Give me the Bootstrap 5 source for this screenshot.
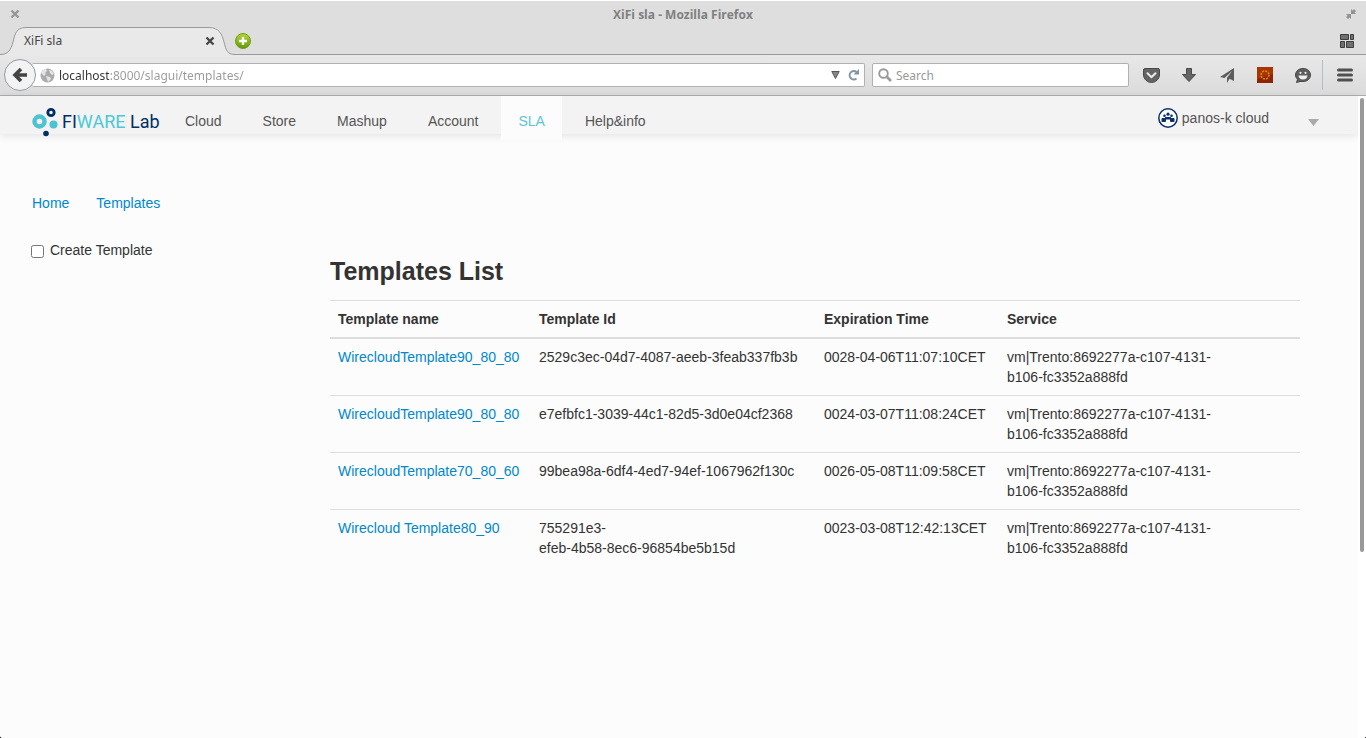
<!DOCTYPE html>
<html lang="en">
<head>
<meta charset="utf-8">
<meta name="viewport" content="width=device-width, initial-scale=1">
<title>XiFi sla</title>
<link href="https://cdn.jsdelivr.net/npm/bootstrap@5.3.0/dist/css/bootstrap.min.css" rel="stylesheet">
<style>
html{background:#000}
body{font:14px/20px "Liberation Sans",Arial,sans-serif;color:#333;background:transparent}
svg{display:block;flex:none}
button{border:0;background:none;padding:0}
.window{height:100vh;min-height:480px;overflow:hidden;background:#fcfcfc;border-radius:0 0 3px 3px}
.chrome{font:12px/16px "Noto Sans","Open Sans",sans-serif;background:#dedede;border-top:1px solid #fff}
.titlebar{height:26px;padding:0 10px;color:#808080;font-family:"Open Sans",sans-serif}
.titlebar strong{padding-top:2px}
.tabs{height:28px;border-bottom:1px solid #999}
.tab-shape{width:235px;height:28px;margin-bottom:-1px}
.tab-shape>svg{position:absolute;left:0;top:0}
.tab-label{position:relative;padding:0 20px 0 24px;height:28px;color:#444}
.tools{height:41px;background:linear-gradient(#e8e8e8,#dbdbdb);border-bottom:1px solid #adadad;padding-left:4px}
.field{height:24px;background:#fff;border:1px solid #b0b0b0;border-radius:2px}
.field input{border:0;outline:0;padding:2px 0 0;background:transparent;min-width:0}
.field input::placeholder{color:#999;opacity:1}
.field .url-input{background:linear-gradient(90deg,#333 50px,#999 50px);-webkit-background-clip:text;background-clip:text;color:transparent}
.url-field{margin-left:-4px;padding:0 5px 0 8px;border-left:0}
.search-field{width:257px;padding:0 6px 0 5px;margin-left:7px}
.back-btn{position:relative;z-index:1}
.tool-icons{padding-left:3px}
.tool-icons button{width:38px;display:flex;justify-content:center}
.tool-icons .menu-btn{width:43px}
.menu-sep{width:1px;height:30px;background:#b4bcc4}
.page-area{background:#fcfcfc}
.scroll-track{width:8px;background:#fff;padding:2px 2px 0}
.scroll-thumb{width:4px;height:71%;background:#999;border-radius:2px}
.topnav{height:38px;background:#f3f3f3;box-shadow:0 2px 8px rgba(0,0,0,.1);padding:0 39px 0 32px;color:#555}
.brand{color:#002e67;width:135px;text-decoration:none;font:18px/20px Roboto,sans-serif;padding-top:7px}
.brand .ware{color:#4cc8d8}
.brand .brand-word{padding-top:9px}
.menu-links{gap:5px}
.menu-links a{color:#555;text-decoration:none;padding:15px 18px 3px;height:38px}
.menu-links a.current{color:#5fc3d6;background:#fcfcfc;height:44px;padding:15px 17px 9px}
.user-btn{color:#555;gap:4px;padding-top:12px}
.crumbs{padding:59px 32px 0;gap:27px}
a{color:#08c;text-decoration:none}
.side{width:299px;padding:27px 0 0 31px}
.side input{width:13px;height:13px;margin:5px 0 0}
.side label{gap:6px}
.listing{padding:43px 58px 0 31px}
h1{font-size:25px;line-height:30px;font-weight:700;margin:0 0 14px}
.tpl-table{--bs-table-bg:transparent;--bs-table-color:#333;color:#333;table-layout:fixed;border-top:1px solid #ddd;margin:0;min-width:930px}
.tpl-table>:not(caption)>*>*{padding:8px;border-bottom:1px solid #ddd}
.tpl-table>thead>tr>th{border-bottom:2px solid #ddd}
.tpl-table>tbody>tr:last-child>td{border-bottom:0}
.c-name{width:201px}.c-id{width:285px}.c-exp{width:183px}.c-end{width:67px}
</style>
</head>
<body>
<div class="window d-flex flex-column">
<header class="chrome flex-shrink-0">
  <div class="titlebar d-flex align-items-center justify-content-between">
    <button aria-label="Close window"><svg width="10" height="10" viewBox="0 0 10 10"><path d="M1.5 1.5l7 7m0-7l-7 7" stroke="#969696" stroke-width="2.4"/></svg></button>
    <strong>XiFi sla - Mozilla Firefox</strong>
    <button aria-label="Restore window"><svg width="10" height="10" viewBox="0 0 10 10" fill="#929292"><path d="M5 0v5h5L8.600 3.600 10 2 8.200.2 6.500 1.500zM0 5h5v5L3.600 8.600 2 10 .2 8.200 1.500 6.500z"/></svg></button>
  </div>
  <div class="tabs d-flex">
    <div class="tab-shape position-relative">
      <svg width="235" height="28"><path d="M0 27.500C8 27.500 11 23 13 15S16-.5 26-.5H209C219-.5 222 6 224 14S227 27.500 235 27.500V28H0z" fill="#e9e9e9"/><path d="M0 27.500C8 27.500 11 23 13 15S16 .5 26 .5H209C219 .5 222 7 224 15S227 27.500 235 27.500" fill="none" stroke="#999"/></svg>
      <div class="tab-label d-flex align-items-center justify-content-between"><span>XiFi sla</span><button aria-label="Close tab"><svg width="10" height="10" viewBox="0 0 10 10"><path d="M1.500 1.500l7 7m0-7l-7 7" stroke="#444" stroke-width="2.300"/></svg></button></div>
    </div>
    <button class="d-flex align-items-center" aria-label="New tab"><svg width="16" height="16" viewBox="0 0 16 16"><defs><linearGradient id="gr" x2="0" y2="1"><stop stop-color="#b5d83a"/><stop offset="1" stop-color="#5e9a05"/></linearGradient></defs><circle cx="8" cy="8" r="7.500" fill="url(#gr)" stroke="#729b16"/><path d="M8 4v8M4 8h8" stroke="#fff" stroke-width="2.400"/></svg></button>
    <button class="ms-auto me-2 pe-1 d-flex align-items-center" aria-label="Tab groups"><svg width="14" height="14" viewBox="0 0 14 14" fill="#707070" stroke="#3d3d3d"><path d="M.5.500h8v5h-8zM10.500.500h3v5h-3zM.5 7.500h4v6h-4zM6.500 7.500h7v6h-7z"/></svg></button>
  </div>
  <div class="tools d-flex align-items-center">
    <button class="back-btn" aria-label="Back"><svg width="32" height="32" viewBox="0 0 32 32"><circle cx="16" cy="16" r="15.500" fill="#f3f3f3" stroke="#9299a1"/><path d="M23 16H12M17 10l-6 6 6 6" fill="none" stroke="#444" stroke-width="3.600"/></svg></button>
    <div class="field url-field d-flex align-items-center flex-grow-1">
      <svg width="15" height="15" viewBox="0 0 15 15"><circle cx="7.500" cy="7.500" r="7" fill="#ababab"/><path d="M1 5c2-4 4-4 5-4l1 2-2 2 1 1-2 2-1-1zM9 2c3 0 4 2 5 4l-2 1-2-2zM6 8l4 1 1 2-3 3-1-3z" fill="#e4e4e4"/></svg>
      <input class="url-input flex-grow-1 ms-1" aria-label="Address" value="localhost:8000/slagui/templates/">
      <button aria-label="Show history"><svg width="9" height="8" viewBox="0 0 9 8"><path d="M.8.500h7.400L4.500 7.500z" fill="#888" stroke="#555"/></svg></button>
      <button class="ms-1 ps-1" aria-label="Reload"><svg width="11" height="12" viewBox="0 0 11 12"><path d="M8.500 9.500A4.200 4.200 0 1 1 8.500 3" fill="none" stroke="#8494a6" stroke-width="2"/><path d="M11 0v5.500H5.500z" fill="#8494a6"/></svg></button>
    </div>
    <div class="field search-field d-flex align-items-center">
      <svg width="14" height="14" viewBox="0 0 14 14" fill="none" stroke="#999"><circle cx="5.500" cy="5.500" r="4.300" stroke-width="1.900"/><path d="M9 9l4 4" stroke-width="2.600"/></svg>
      <input class="flex-grow-1 ms-1" aria-label="Search" placeholder="Search">
    </div>
    <div class="tool-icons d-flex align-items-center">
      <button aria-label="Pocket"><svg width="17" height="15" viewBox="0 0 17 15"><path d="M.5 2Q.5.500 2 .5h13q1.500 0 1.500 1.500v5q0 3-2.500 5.300-2.300 2.200-5.500 2.200T3 12.300Q.5 10 .5 7z" fill="#646464" stroke="#4a4a4a"/><path d="M4.500 5.300l4 3.800 4-3.800" fill="none" stroke="#eee" stroke-width="2" stroke-linecap="round"/></svg></button>
      <button aria-label="Downloads"><svg width="14" height="14" viewBox="0 0 14 14"><path d="M4.500.5h5v6h4L7 13.500.5 6.500h4z" fill="#656565" stroke="#4a4a4a"/></svg></button>
      <button aria-label="Share"><svg width="14" height="15" viewBox="0 0 14 15"><path d="M14 0v13l-4.500-2.200L7 15V9.800L12 3 4.500 10 0 9z" fill="#5c5c5c"/></svg></button>
      <button aria-label="Sun add-on"><svg width="16" height="16" viewBox="0 0 16 16"><path fill="#8e2400" d="M0 0h16v16H0z"/><path fill="#a93600" d="M0 0h16v7L0 12z"/><circle cx="8" cy="8" r="4" fill="none" stroke="#d98b18" stroke-width="1.500" stroke-dasharray="2 1.100"/></svg></button>
      <button aria-label="Chat"><svg width="16" height="15" viewBox="0 0 16 15"><path d="M8 .5c4.300 0 7.500 2.700 7.500 6.500S12.300 13.500 8 13.500H5L1.500 14.500l1-3.200C1.200 10.200.5 8.700.5 7 .5 3.200 3.700.5 8 .5z" fill="#5d5d5d" stroke="#484848"/><g fill="#eee"><circle cx="5.500" cy="4.800" r="1.100"/><circle cx="10.500" cy="4.800" r="1.100"/><path d="M3.500 7.500h9Q12 11.500 8 11.500T3.500 7.500z"/></g></svg></button>
      <span class="menu-sep"></span>
      <button class="menu-btn" aria-label="Menu"><svg width="16" height="14" viewBox="0 0 16 14"><path d="M1.500 2h13M1.500 7h13M1.500 12h13" stroke="#505050" stroke-width="3" stroke-linecap="round"/></svg></button>
    </div>
  </div>
</header>
<div class="page-area d-flex flex-grow-1">
  <div class="flex-grow-1">
    <nav class="topnav d-flex align-items-start">
      <a class="brand d-flex" href="#"><svg width="30" height="34" viewBox="0 0 30 34"><g fill="none"><circle cx="7.500" cy="18.500" r="5" stroke="#4cc3d3" stroke-width="4.400"/><circle cx="19" cy="9.500" r="3.200" stroke="#002e67" stroke-width="2.800"/></g><circle cx="21.500" cy="21.500" r="4" fill="#4cc3d3"/><circle cx="14" cy="30.500" r="2.800" fill="#002e67"/></svg><span class="brand-word text-nowrap">FI<span class="ware">WARE</span> Lab</span></a>
      <div class="menu-links d-flex align-items-start">
        <a href="#">Cloud</a><a href="#">Store</a><a href="#">Mashup</a><a href="#">Account</a><a class="current" href="#" aria-current="page">SLA</a><a href="#">Help&amp;info</a>
      </div>
      <button class="user-btn d-flex align-items-center ms-auto">
        <svg width="20" height="20" viewBox="0 0 20 20"><circle cx="10" cy="10" r="9.200" fill="#fff" stroke="#0a2f6b" stroke-width="1.500"/><g fill="#0a2f6b"><circle cx="10" cy="6.200" r="1.600"/><circle cx="6.500" cy="7.800" r="1.300"/><circle cx="13.500" cy="7.800" r="1.300"/><rect x="3.500" y="10" width="4.500" height="4" rx="1"/><rect x="12" y="10" width="4.500" height="4" rx="1"/><path d="M7 9h6l-.5 2.500h-5z"/></g></svg>
        <span>panos-k cloud</span>
        <svg class="ms-4 mt-2" width="22" height="7" viewBox="0 0 22 7"><path d="M11 0h11l-5.500 7z" fill="#aaa"/></svg>
      </button>
    </nav>
    <div class="crumbs d-flex"><a href="#">Home</a><a href="#">Templates</a></div>
    <main class="d-flex">
      <aside class="side flex-shrink-0"><label class="d-flex align-items-start"><input type="checkbox"><span>Create Template</span></label></aside>
      <section class="listing flex-grow-1">
        <h1>Templates List</h1>
        <table class="table tpl-table">
          <colgroup><col class="c-name"><col class="c-id"><col class="c-exp"><col><col class="c-end"></colgroup>
          <thead><tr><th>Template name</th><th>Template Id</th><th>Expiration Time</th><th>Service</th><th></th></tr></thead>
          <tbody>
            <tr><td><a href="#">WirecloudTemplate90_80_80</a></td><td>2529c3ec-04d7-4087-aeeb-3feab337fb3b</td><td>0028-04-06T11:07:10CET</td><td>vm|Trento:8692277a-c107-4131-<br>b106-fc3352a888fd</td><td></td></tr>
            <tr><td><a href="#">WirecloudTemplate90_80_80</a></td><td>e7efbfc1-3039-44c1-82d5-3d0e04cf2368</td><td>0024-03-07T11:08:24CET</td><td>vm|Trento:8692277a-c107-4131-<br>b106-fc3352a888fd</td><td></td></tr>
            <tr><td><a href="#">WirecloudTemplate70_80_60</a></td><td>99bea98a-6df4-4ed7-94ef-1067962f130c</td><td>0026-05-08T11:09:58CET</td><td>vm|Trento:8692277a-c107-4131-<br>b106-fc3352a888fd</td><td></td></tr>
            <tr><td><a href="#">Wirecloud Template80_90</a></td><td>755291e3-<br>efeb-4b58-8ec6-96854be5b15d</td><td>0023-03-08T12:42:13CET</td><td>vm|Trento:8692277a-c107-4131-<br>b106-fc3352a888fd</td><td></td></tr>
          </tbody>
        </table>
      </section>
    </main>
  </div>
  <div class="scroll-track flex-shrink-0"><div class="scroll-thumb"></div></div>
</div>
</div>
<script src="https://cdn.jsdelivr.net/npm/bootstrap@5.3.0/dist/js/bootstrap.bundle.min.js"></script>
</body>
</html>
